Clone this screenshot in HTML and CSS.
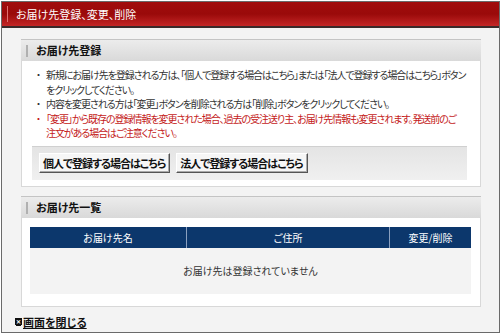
FILE: index.html
```html
<!DOCTYPE html>
<html lang="ja">
<head>
    <meta charset="UTF-8">
    <title>お届け先登録、変更、削除</title>
    <link rel="stylesheet" href="styles.css">
</head>
<body>
    <div class="window">
        <h1 class="page-title">お届け先登録、変更、削除</h1>
        <div class="main">
            <div class="section">
                <h2 class="section-title">お届け先登録</h2>
                <div class="section-body">
                    <ul class="notes">
                        <li>新規にお届け先を登録される方は、「個人で登録する場合はこちら」または「法人で登録する場合はこちら」ボタン<br>をクリックしてください。</li>
                        <li>内容を変更される方は「変更」ボタンを削除される方は「削除」ボタンをクリックしてください。</li>
                        <li class="warn">「変更」から既存の登録情報を変更された場合、過去の受注送り主、お届け先情報も変更されます。発送前のご<br>注文がある場合はご注意ください。</li>
                    </ul>
                    <div class="button-bar">
                        <button class="btn">個人で登録する場合はこちら</button>
                        <button class="btn">法人で登録する場合はこちら</button>
                    </div>
                </div>
            </div>
            <div class="section">
                <h2 class="section-title">お届け先一覧</h2>
                <div class="section-body list-body">
                    <table class="addr-table">
                        <tr>
                            <th class="col-name">お届け先名</th>
                            <th class="col-addr">ご住所</th>
                            <th class="col-edit">変更/削除</th>
                        </tr>
                        <tr>
                            <td class="empty" colspan="3">お届け先は登録されていません</td>
                        </tr>
                    </table>
                </div>
            </div>
            <a class="close-link" href="#"><span class="close-icon">✕</span>画面を閉じる</a>
        </div>
    </div>
</body>
</html>
```

FILE: styles.css
```css
html, body {
    margin: 0;
    padding: 0;
    background: #fff;
    font-family: "Noto Sans CJK JP", "Noto Sans", sans-serif;
    font-feature-settings: "palt";
    font-size: 10px;
    color: #333;
}

.window {
    box-sizing: border-box;
    width: 499px;
    height: 332px;
    margin: 1px 0 0 1px;
    border: 1px solid #6a6a6a;
    background: #f3f3f3;
    display: flex;
    flex-direction: column;
}

.page-title {
    margin: 0;
    height: 24px;
    line-height: 24px;
    padding-left: 14px;
    position: relative;
    font-size: 11px;
    font-weight: normal;
    color: #fff;
    background: linear-gradient(#a10d0d, #9a0a0a 50%, #c42626);
    border-bottom: 2px solid #3a2a2a;
}

.page-title::before {
    content: '';
    position: absolute;
    left: 5px;
    top: 4px;
    width: 1px;
    height: 16px;
    background: #e07070;
}

.main {
    flex: 1;
    padding: 11px 18px 0 19px;
    display: flex;
    flex-direction: column;
}

.section {
    margin-bottom: 9px;
}

.section-title {
    margin: 0;
    height: 21px;
    line-height: 21px;
    padding-left: 15px;
    position: relative;
    font-size: 11px;
    font-weight: bold;
    color: #111;
    background: linear-gradient(#ececec, #d9d9d9);
    border-top: 1px solid #c4c4c4;
}

.section-title::before {
    content: '';
    position: absolute;
    left: 5px;
    top: 5px;
    width: 2px;
    height: 12px;
    background: #b0b0b0;
}

.section-body {
    background: #fff;
    border: 1px solid #d8d8d8;
    border-top: none;
    padding: 7px 13px 6px 10px;
}

.notes {
    margin: 0;
    padding: 0 0 0 14px;
    list-style: none;
    line-height: 14.6px;
    letter-spacing: -1.05px;
    white-space: nowrap;
}

.notes li {
    position: relative;
}

.notes li::before {
    content: '・';
    position: absolute;
    left: -10px;
}

.notes .warn {
    color: #c41a1a;
}

.button-bar {
    margin-top: 5px;
    height: 33px;
    padding: 0 7px;
    display: flex;
    align-items: center;
    gap: 6px;
    background: linear-gradient(#e4e4e4, #f0f0f0);
    border-top: 1px solid #d0d0d0;
}

.btn {
    font-family: inherit;
    font-feature-settings: "palt";
    font-size: 11px;
    font-weight: bold;
    letter-spacing: -1px;
    color: #111;
    height: 20px;
    padding: 0 4px 0 3px;
    background: #f6f6f6;
    border: 1px solid;
    border-color: #fff #555 #555 #fff;
    box-shadow: inset -1px -1px 0 #aaa;
}

.list-body {
    padding: 9px 9px 12px 8px;
}

.addr-table {
    width: 100%;
    border-collapse: collapse;
}

.addr-table th {
    height: 21px;
    padding: 0;
    font-weight: normal;
    color: #fff;
    background: #0c376c;
    border-left: 1px solid #8aa0c0;
}

.addr-table th:first-child {
    border-left: none;
}

.col-name {
    width: 156px;
}

.col-edit {
    width: 81px;
}

.addr-table .empty {
    height: 46px;
    padding: 0;
    text-align: center;
    background: #f3f3f3;
    color: #333;
}

.close-link {
    display: flex;
    align-items: center;
    line-height: 12px;
    margin: 0 0 0 -6px;
    font-size: 11px;
    font-weight: bold;
    color: #111;
    text-decoration: underline;
}

.close-icon {
    width: 7px;
    height: 7px;
    margin-right: 1px;
    background: #111;
    color: #fff;
    font-size: 6px;
    line-height: 7px;
    text-align: center;
    text-decoration: none;
}
```
